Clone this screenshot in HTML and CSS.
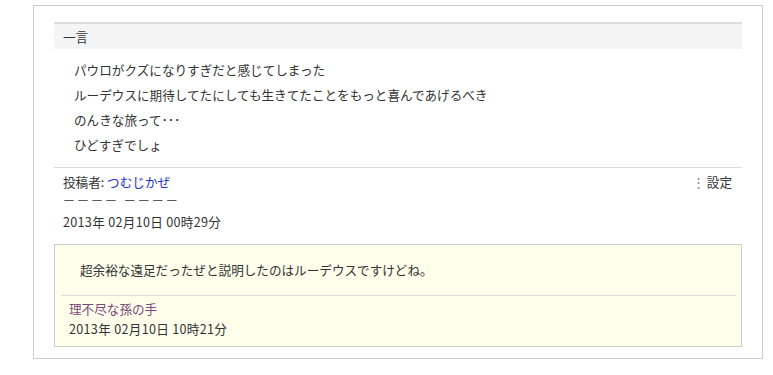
FILE: index.html
```html
<!DOCTYPE html>
<html>
<head>
<title>一言</title>
<meta charset="utf-8">
<link rel="stylesheet" href="styles.css">
</head>
<body>

<div class="box">
	<div class="head">一言</div>

	<div class="comment">
		<p>パウロがクズになりすぎだと感じてしまった</p>
		<p>ルーデウスに期待してたにしても生きてたことをもっと喜んであげるべき</p>
		<p>のんきな旅って･･･</p>
		<p>ひどすぎでしょ</p>
	</div>

	<div class="info">
		<div class="infoTop">
			<span>投稿者: <a href="#">つむじかぜ</a></span>
			<span class="setting"><span class="dots">⋮</span>設定</span>
		</div>
		<div class="dash">ーーーー ーーーー</div>
		<div class="date">2013年 02月10日 00時29分</div>
	</div>

	<div class="reply">
		<p class="replyText">超余裕な遠足だったぜと説明したのはルーデウスですけどね。</p>
		<div class="replyFoot">
			<div class="author">理不尽な孫の手</div>
			<div class="date">2013年 02月10日 10時21分</div>
		</div>
	</div>
</div>

</body>
</html>
```

FILE: styles.css
```css
body {
	margin: 0;
	font-family: "Noto Sans CJK JP", "Liberation Sans", sans-serif;
	font-size: 12.6px;
	color: #333;
}

p {
	margin: 0;
}

.box {
	width: 688px;
	height: 336px;
	margin: 5px 0 0 33px;
	padding: 16px 20px 0 20px;
	border: 1px solid #ccc;
}

.head {
	height: 25px;
	line-height: 25px;
	padding-left: 9px;
	border-top: 2px solid #ddd;
	background-color: #f4f4f4;
}

.comment {
	padding: 8px 0 10px 20px;
	border-bottom: 1px solid #ddd;
}

.comment p {
	line-height: 25px;
}

.info {
	padding: 5px 10px 0 9px;
}

.infoTop {
	display: flex;
	justify-content: space-between;
	height: 18px;
	line-height: 18px;
}

.infoTop a {
	color: #2233cc;
	text-decoration: none;
}

.dots {
	color: #888;
	margin-right: 2px;
}

.dash {
	height: 20px;
	line-height: 20px;
	font-size: 12px;
	font-weight: 300;
	letter-spacing: 2px;
}

.date {
	letter-spacing: 0.3px;
}

.info .date {
	margin-top: 2px;
	height: 18px;
	line-height: 18px;
}

.reply {
	margin-top: 13px;
	height: 101px;
	border: 1px solid #ccc;
	background-color: #fefeeb;
}

.replyText {
	padding: 15px 0 0 25px;
	line-height: 20px;
}

.replyFoot {
	margin: 15px 5px 0 6px;
	padding: 4px 0 0 8px;
	border-top: 1px solid #ddd;
}

.author {
	height: 18px;
	line-height: 18px;
	color: #7a4a7a;
}

.replyFoot .date {
	margin-top: 2px;
	height: 18px;
	line-height: 18px;
}
```
